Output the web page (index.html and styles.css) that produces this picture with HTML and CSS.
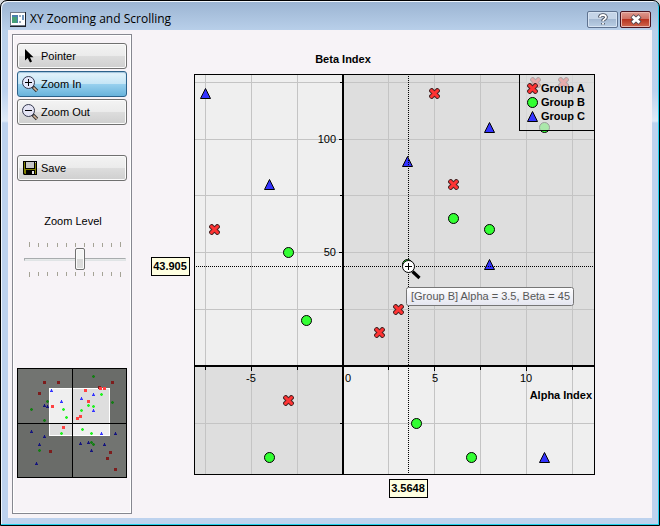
FILE: index.html
```html
<!DOCTYPE html>
<html lang="en">
<head>
<meta charset="utf-8">
<title>XY Zooming and Scrolling</title>
<link rel="stylesheet" href="styles.css">
</head>
<body>
<div class="window">
  <header class="titlebar">
    <svg class="app-icon" width="16" height="15" viewBox="0 0 16 15" aria-hidden="true">
      <rect width="16" height="15" fill="#1c2028"/>
      <rect width="15" height="14" fill="#707a88"/>
      <rect x="1" y="1" width="14" height="12" fill="#fff"/>
      <rect x="2" y="3" width="6" height="8" fill="#4b7fae"/>
      <rect x="2" y="5" width="5" height="6" fill="#46a077"/>
      <rect x="9" y="3" width="2" height="2" fill="#9ab"/><rect x="9" y="9" width="2" height="2" fill="#9ab"/>
      <rect x="12" y="3" width="2" height="5" fill="#6f96bf"/>
    </svg>
    <h1 class="title">XY Zooming and Scrolling</h1>
    <div class="controls">
      <button class="caption-btn" type="button" aria-label="Help">
        <svg width="12" height="13" viewBox="0 0 12 13"><path d="M3 4.500V3.500Q3.500 2 6 2T9 4Q9 5.500 7.500 6.200Q6 7 6 8.300M6 10V11.500" fill="none" stroke="#474e5c" stroke-width="3.600"/><path d="M3 4.300V3.500Q3.500 2 6 2T9 4Q9 5.500 7.500 6.200Q6 7 6 8.300M6 10V11.500" fill="none" stroke="#fff" stroke-width="1.800"/></svg>
      </button>
      <button class="caption-btn close" type="button" aria-label="Close">
        <svg width="12" height="11" viewBox="0 0 12 11"><path d="M2 2L10 9M10 2L2 9" stroke="#4c4650" stroke-width="4.600"/><path d="M2.500 2.400L9.500 8.600M9.500 2.400L2.500 8.600" stroke="#fff" stroke-width="2.800"/></svg>
      </button>
    </div>
  </header>
  <div class="client">
    <aside class="sidebar">
      <div class="tools">
        <button class="tool" type="button">
          <svg width="18" height="18" viewBox="0 0 18 18"><path d="M4 2V13.500L6.700 11L9 15.500L11 14.500L9 10.300H12.500Z" fill="#000"/></svg>Pointer</button>
        <button class="tool active" type="button">
          <svg width="18" height="18" viewBox="0 0 18 18"><path d="M11.500 11.500L16 16" stroke="#333" stroke-width="3.400"/><path d="M12.500 12.500L15.800 15.800" stroke="#d8b89c" stroke-width="1.600"/><circle cx="7.500" cy="7.500" r="6" fill="#e4e8fb" stroke="#34384e"/><path d="M4 7.500H11M7.500 4V11" stroke="#000"/></svg>Zoom In</button>
        <button class="tool" type="button">
          <svg width="18" height="18" viewBox="0 0 18 18"><path d="M11.500 11.500L16 16" stroke="#333" stroke-width="3.400"/><path d="M12.500 12.500L15.800 15.800" stroke="#d8b89c" stroke-width="1.600"/><circle cx="7.500" cy="7.500" r="6" fill="#e4e4f4" stroke="#34384e"/><path d="M4 7.500H11" stroke="#000"/></svg>Zoom Out</button>
      </div>
      <button class="tool save" type="button">
        <svg width="18" height="18" viewBox="0 0 18 18"><path d="M2 2H16V16H3L2 15Z" fill="#000"/><path d="M3 3H15V15H4L3 14Z" fill="#808000"/><rect x="4" y="2" width="10" height="8" fill="#000"/><rect x="5" y="3" width="8" height="6" fill="#c6c6c6"/><rect x="14" y="3" width="1" height="1" fill="#c6c6c6"/><rect x="5" y="11" width="9" height="4" fill="#000"/><rect x="11" y="12" width="2" height="3" fill="#e4e4e4"/></svg>Save</button>
      <div class="zoom">
        <label for="zoom-level">Zoom Level</label>
        <svg class="ticks" viewBox="0 0 102 5"><path d="M5.500 0V5M96.500 0V5M14.500 1V5M23.500 1V5M33.500 1V5M42.500 1V5M51.500 1V5M60.500 1V5M69.500 1V5M78.500 1V5M87.500 1V5" stroke="#a5a396"/></svg>
        <input id="zoom-level" type="range" min="0" max="100" value="56">
        <svg class="ticks" viewBox="0 0 102 5"><path d="M5.500 0V5M96.500 0V5M14.500 0V4M23.500 0V4M33.500 0V4M42.500 0V4M51.500 0V4M60.500 0V4M69.500 0V4M78.500 0V4M87.500 0V4" stroke="#a5a396"/></svg>
      </div>
      <svg class="overview" viewBox="0 0 110 110" role="img" aria-label="Overview">
        <defs>
          <rect id="ms" x="-1" y="-1" width="3" height="3"/>
          <g id="mp"><rect x="-1" y="-1" width="3" height="3" opacity=".35"/><path d="M0-1H1V0H2V1H1V2H0V1H-1V0H0Z"/></g>
          <g id="mt"><rect x="-1" width="3" height="2" opacity=".4"/><path d="M0-1H1V1H2V2H-1V1H0Z"/></g>
        </defs>
        <rect width="110" height="110" fill="#6a6c69"/>
        <path d="M0 0H55V55H110V110H55V55H0Z" fill="#727471"/>
        <rect x="32" y="20" width="61" height="48" fill="#fff"/>
        <path d="M33 21H55V55H92V67H55V55H33Z" fill="#efefef"/>
        <path d="M55 21H92V55H55ZM33 55H55V67H33Z" fill="#dedede"/>
        <path d="M55.500 0V110M0 55.500H110" stroke="#000"/>
        <g fill="#7d1c1c"><use href="#ms" x="27" y="14"/><use href="#ms" x="41" y="14"/><use href="#ms" x="22" y="25"/><use href="#ms" x="95" y="14"/><use href="#ms" x="82" y="19"/><use href="#ms" x="33" y="83"/><use href="#ms" x="93" y="84"/><use href="#ms" x="90" y="90"/><use href="#ms" x="98" y="101"/></g>
        <g fill="#ff4141"><use href="#ms" x="68" y="22"/><use href="#ms" x="71" y="33"/><use href="#ms" x="35" y="38"/><use href="#ms" x="46" y="59"/><use href="#ms" x="60" y="50"/><use href="#ms" x="63" y="48"/><use href="#ms" x="83" y="20"/><use href="#ms" x="87" y="20"/></g>
        <g fill="#147d14"><use href="#mp" x="76" y="8"/><use href="#mp" x="30" y="33"/><use href="#mp" x="14" y="41"/><use href="#mp" x="27" y="52"/><use href="#mp" x="95" y="34"/><use href="#mp" x="22" y="82"/><use href="#mp" x="74" y="74"/><use href="#mp" x="76" y="76"/></g>
        <g fill="#22f222"><use href="#mp" x="84" y="26"/><use href="#mp" x="46" y="41"/><use href="#mp" x="49" y="49"/><use href="#mp" x="71" y="37"/><use href="#mp" x="76" y="38"/><use href="#mp" x="64" y="42"/><use href="#mp" x="65" y="61"/><use href="#mp" x="44" y="65"/><use href="#mp" x="74" y="65"/></g>
        <g fill="#14147d"><use href="#mt" x="27" y="37"/><use href="#mt" x="30" y="38"/><use href="#mt" x="14" y="63"/><use href="#mt" x="27" y="68"/><use href="#mt" x="22" y="76"/><use href="#mt" x="19" y="95"/><use href="#mt" x="63" y="75"/><use href="#mt" x="71" y="74"/><use href="#mt" x="74" y="82"/><use href="#mt" x="87" y="76"/><use href="#mt" x="98" y="65"/></g>
        <g fill="#3333ff"><use href="#mt" x="34" y="22"/><use href="#mt" x="44" y="33"/><use href="#mt" x="64" y="30"/><use href="#mt" x="76" y="26"/><use href="#mt" x="76" y="42"/><use href="#mt" x="84" y="65"/></g>
        <rect x=".5" y=".5" width="109" height="109" fill="none" stroke="#000"/>
      </svg>
    </aside>
    <main class="main">
      <svg class="chart" viewBox="0 0 520 488" role="img" aria-label="Beta Index against Alpha Index">
        <defs>
          <g id="a"><path d="M-5.500-3.500L-3.500-5.500H-2L0-3.500L2-5.500H3.500L5.500-3.500V-2L3.500 0L5.500 2V3.500L3.500 5.500H2L0 3.500L-2 5.500H-3.500L-5.500 3.500V2L-3.500 0L-5.500-2Z" fill="#4c2626"/><path d="M-3-3L3 3M3-3L-3 3" stroke="#ff3333" stroke-width="3" stroke-linecap="round"/></g>
          <circle id="b" r="5" fill="#33ff33" stroke="#000"/>
          <path id="c" d="M0-5L5 5H-5Z" fill="#3333ff" stroke="#000"/>
        </defs>
        <text class="bold" x="211" y="33" text-anchor="middle">Beta Index</text>
        <!-- plot area, origin of the axes at (149, 292) -->
        <g transform="translate(62 44)">
          <rect width="401" height="401" fill="#efefef"/>
          <path d="M149 0H401V292H149ZM0 292H149V401H0Z" fill="#dedede"/>
          <path d="M11.500 0V401M57.500 0V401M103.500 0V401M194.500 0V401M240.500 0V401M286.500 0V401M332.500 0V401M378.500 0V401M0 8.500H401M0 65.500H401M0 121.500H401M0 178.500H401M0 235.500H401M0 349.500H401" stroke="#c4c4c4"/>
          <path d="M149 0V401M0 292H401" stroke="#000" stroke-width="2"/>
          <path d="M11.500 293V296M57.500 293V297M103.500 293V296M194.500 293V296M240.500 293V297M286.500 293V296M332.500 293V297M378.500 293V296M146 8.500H148M145 65.500H148M146 121.500H148M145 178.500H148M146 235.500H148M146 349.500H148" stroke="#000"/>
          <rect x=".5" y=".5" width="400" height="400" fill="none" stroke="#000"/>
          <g text-anchor="end"><text x="142" y="69">100</text><text x="142" y="182">50</text></g>
          <g text-anchor="middle"><text x="57" y="308">-5</text><text x="154" y="308">0</text><text x="241" y="308">5</text><text x="332" y="308">10</text></g>
          <text class="bold" x="398" y="325" text-anchor="end">Alpha Index</text>
          <use href="#a" x="240.500" y="19.500"/><use href="#a" x="259.500" y="110.500"/><use href="#a" x="204.500" y="235.500"/><use href="#a" x="185.500" y="258.500"/><use href="#a" x="20.500" y="155.500"/><use href="#a" x="94.500" y="326.500"/><use href="#a" x="341.500" y="8.500"/><use href="#a" x="369.500" y="8.500"/>
          <use href="#b" x="94.500" y="178.500"/><use href="#b" x="112.500" y="246.500"/><use href="#b" x="259.500" y="144.500"/><use href="#b" x="295.500" y="155.500"/><use href="#b" x="350.500" y="53.500"/><use href="#b" x="213.500" y="190.500"/><use href="#b" x="222.500" y="349.500"/><use href="#b" x="277.500" y="383.500"/><use href="#b" x="75.500" y="383.500"/>
          <use href="#c" x="11.500" y="19.500"/><use href="#c" x="75.500" y="110.500"/><use href="#c" x="213.500" y="87.500"/><use href="#c" x="295.500" y="53.500"/><use href="#c" x="295.500" y="190.500"/><use href="#c" x="350.500" y="383.500"/>
          <path d="M214.500 2V400M2 192.500H400" stroke="#000" stroke-dasharray="1 1"/>
          <rect x="325.500" y=".5" width="75" height="56" fill="#dedede" fill-opacity=".7" stroke="#000"/>
          <use href="#a" x="338.500" y="14.500"/><use href="#b" x="338.500" y="28.500"/><use href="#c" x="338.500" y="42.500"/>
          <g class="bold"><text x="347" y="18">Group A</text><text x="347" y="32">Group B</text><text x="347" y="46">Group C</text></g>
          <path d="M218.500 197.500L225.500 204" stroke="#000" stroke-width="3.200"/>
          <circle cx="214.500" cy="192.500" r="6" fill="#fff" stroke="#000"/>
          <path d="M211 192.500H218M214.500 189V196" stroke="#000"/>
        </g>
        <g class="bold" text-anchor="middle">
          <rect x="19.500" y="227.500" width="38" height="18" fill="#ffffe1" stroke="#000"/><text x="38" y="240">43.905</text>
          <rect x="257.500" y="449.500" width="38" height="18" fill="#ffffe1" stroke="#000"/><text x="276" y="462">3.5648</text>
        </g>
        <linearGradient id="tip" x2="0" y2="1"><stop stop-color="#fff"/><stop offset="1" stop-color="#e4e5f0"/></linearGradient>
        <rect x="274.500" y="257.500" width="167" height="18" rx="2" fill="url(#tip)" stroke="#767676"/>
        <text class="tip" x="279" y="270">[Group B] Alpha = 3.5, Beta = 45</text>
      </svg>
    </main>
  </div>
</div>
</body>
</html>
```
FILE: styles.css
```css
* {
  box-sizing: border-box;
}

body {
  margin: 0;
  background: #d8dce0;
  color: #000;
  font: 11px/14px "Liberation Sans", Arial, sans-serif;
}

svg {
  display: block;
  flex: none;
}

.window {
  display: flex;
  flex-direction: column;
  min-height: 100vh;
  padding: 0 7px 7px;
  border: 1px solid #000;
  border-radius: 7px 7px 0 0;
  background: linear-gradient(#9bb4d2, #b9d0ea 30px, #bdd2ee 90px, #dfeaf7 120px, #bdd2ee 122px);
  box-shadow: inset -1px -1px #22d0ec, inset 1px 1px #f0f6fc;
}

.titlebar {
  display: flex;
  align-items: center;
  height: 29px;
  padding: 7px 1px 0 2px;
}

.title {
  flex: 1;
  margin: 0 0 0 4px;
  font: 12px/16px "Open Sans", "Noto Sans", sans-serif;
}

.controls {
  display: flex;
  gap: 2px;
}

.caption-btn {
  display: flex;
  align-items: center;
  justify-content: center;
  width: 31px;
  height: 17px;
  padding: 0;
  border: 1px solid #5f7390;
  border-radius: 2px;
  background: linear-gradient(#c5d5e8 50%, #a5bad3 50%, #bacee4);
  box-shadow: inset 0 0 0 1px #d6e3f2;
}

.caption-btn.close {
  border-color: #4a1420;
  background: linear-gradient(#dd9a90, #cf6d5f 50%, #b83420 50%, #d0674f);
  box-shadow: inset 0 0 0 1px #e9b5ad;
}

.client {
  display: flex;
  flex: 1;
  padding: 4px 0 4px 4px;
  background: #f7f3f7;
}

.sidebar {
  display: flex;
  flex-direction: column;
  flex: none;
  width: 120px;
  padding: 8px 4px;
  border: 1px solid #868790;
  box-shadow: inset 0 0 0 1px #fff;
}

.tools {
  display: flex;
  flex-direction: column;
  gap: 2px;
}

.tool {
  display: flex;
  align-items: center;
  gap: 2px;
  width: 100%;
  height: 26px;
  padding: 0 3px;
  border: 1px solid #707070;
  border-radius: 3px;
  background: linear-gradient(#f3f3f3, #ebebeb 50%, #dddddd 50%, #cfcfcf);
  box-shadow: inset 0 0 0 1px #fbfbfb;
  color: #000;
  font: inherit;
}

.tool.active {
  border-color: #2c628b;
  background: linear-gradient(#e5f4fc, #c4e5f6 50%, #98d1ef 50%, #68b3db);
  box-shadow: inset 0 1px 1px #9fc4dc;
}

.save {
  margin-top: 30px;
}

.zoom {
  display: flex;
  flex-direction: column;
  align-items: center;
  padding: 33px 1px 0 7px;
}

.zoom label {
  margin-bottom: 14px;
  padding-right: 4px;
}

.ticks {
  width: 100%;
}

.zoom input {
  width: 100%;
  height: 22px;
  margin: 1px 0 2px;
  appearance: none;
  background: none;
}

.zoom input::-webkit-slider-runnable-track {
  height: 3px;
  border: 1px solid #e0e4e6;
  border-top-color: #a8acae;
  border-left-color: #a8acae;
  background: #e7eaea;
}

.zoom input::-webkit-slider-thumb {
  width: 10px;
  height: 22px;
  margin-top: -11px;
  appearance: none;
  border: 1px solid #707070;
  border-radius: 2px;
  background: linear-gradient(#f4f4f4 50%, #d8d8d8 50%, #dedede);
  box-shadow: inset 0 0 0 1px #fbfbfb;
}

.overview {
  width: 100%;
  margin-top: 91px;
}

.main {
  flex: 1;
  min-width: 0;
  margin: -4px 0;
}

.chart {
  width: 100%;
}

.bold {
  font-weight: bold;
}

.tip {
  fill: #575757;
}
```
